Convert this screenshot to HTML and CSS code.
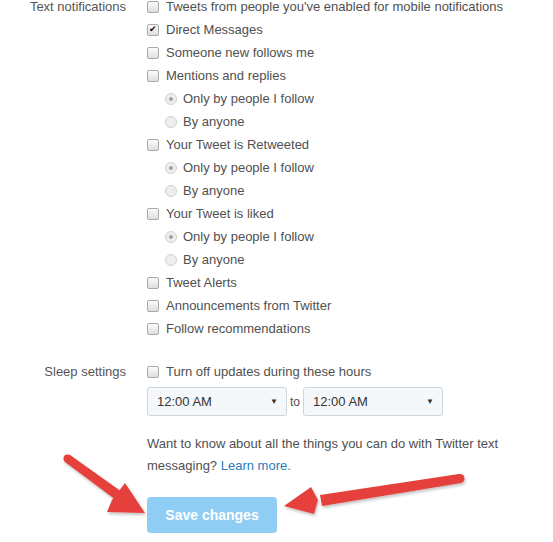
FILE: index.html
```html
<!DOCTYPE html>
<html>
<head>
<meta charset="utf-8">
<link rel="stylesheet" href="styles.css">
</head>
<body>
<div class="page">
  <div class="field">
    <div class="label">Text notifications</div>
    <div class="options">
      <div class="opt"><span class="cb"></span>Tweets from people you've enabled for mobile notifications</div>
      <div class="opt"><span class="cb checked">&#10004;</span>Direct Messages</div>
      <div class="opt"><span class="cb"></span>Someone new follows me</div>
      <div class="opt"><span class="cb"></span>Mentions and replies</div>
      <div class="opt sub"><span class="rd on"></span>Only by people I follow</div>
      <div class="opt sub"><span class="rd"></span>By anyone</div>
      <div class="opt"><span class="cb"></span>Your Tweet is Retweeted</div>
      <div class="opt sub"><span class="rd on"></span>Only by people I follow</div>
      <div class="opt sub"><span class="rd"></span>By anyone</div>
      <div class="opt"><span class="cb"></span>Your Tweet is liked</div>
      <div class="opt sub"><span class="rd on"></span>Only by people I follow</div>
      <div class="opt sub"><span class="rd"></span>By anyone</div>
      <div class="opt"><span class="cb"></span>Tweet Alerts</div>
      <div class="opt"><span class="cb"></span>Announcements from Twitter</div>
      <div class="opt"><span class="cb"></span>Follow recommendations</div>
    </div>
  </div>

  <div class="field sleep">
    <div class="label">Sleep settings</div>
    <div class="options">
      <div class="opt"><span class="cb"></span>Turn off updates during these hours</div>
      <div class="times">
        <div class="select"><span>12:00 AM</span><span class="caret">&#9660;</span></div>
        <span class="to">to</span>
        <div class="select"><span>12:00 AM</span><span class="caret">&#9660;</span></div>
      </div>
    </div>
  </div>

  <div class="field">
    <div class="label"></div>
    <div class="options">
      <div class="info">
        <div>Want to know about all the things you can do with Twitter text</div>
        <div>messaging? <a href="#">Learn more.</a></div>
      </div>
      <button class="save">Save changes</button>
    </div>
  </div>
</div>

<svg class="arrows" width="553" height="542" viewBox="0 0 553 542">
  <defs>
    <filter id="sh" x="-20%" y="-20%" width="140%" height="140%">
      <feDropShadow dx="1" dy="2" stdDeviation="1.5" flood-color="#000" flood-opacity="0.25"/>
    </filter>
  </defs>
  <g fill="#e5403b" filter="url(#sh)">
    <polygon points="65,462 70,455 122,492 116,500"/>
    <circle cx="67.5" cy="458.5" r="4"/>
    <polygon points="145,513 107,512 112,500 125,483"/>
    <polygon points="320,495 459,474 461,483 322,506"/>
    <circle cx="460" cy="478.5" r="4.5"/>
    <polygon points="284,506 311,487 318,500 314,514"/>
  </g>
</svg>
</body>
</html>
```
FILE: styles.css
```css
html, body {
  margin: 0;
  padding: 0;
  background: #fff;
}
body {
  font-family: "Liberation Sans", Arial, sans-serif;
  font-size: 13px;
  color: #505050;
  position: relative;
  width: 553px;
  height: 542px;
  overflow: hidden;
}
.page {
  margin-top: -5px;
}
.field {
  display: grid;
  grid-template-columns: 126px 1fr;
  column-gap: 21px;
}
.label {
  text-align: right;
  line-height: 23px;
  height: 23px;
  color: #555;
}
.sleep {
  margin-top: 20px;
}
.opt {
  display: flex;
  align-items: center;
  height: 23px;
  white-space: nowrap;
}
.opt.sub {
  padding-left: 18px;
}
.cb {
  box-sizing: border-box;
  width: 12px;
  height: 12px;
  border: 1px solid #a9a9a9;
  border-radius: 2px;
  background: linear-gradient(#fbfbfb, #dedede);
  margin-right: 7px;
  flex: none;
  display: flex;
  align-items: center;
  justify-content: center;
  font-size: 9px;
  line-height: 1;
  color: #111;
}
.rd {
  box-sizing: border-box;
  width: 12px;
  height: 12px;
  border: 1px solid #d0d0d0;
  border-radius: 50%;
  background: #eee;
  margin-right: 6px;
  flex: none;
  display: flex;
  align-items: center;
  justify-content: center;
}
.rd.on::after {
  content: "";
  width: 4px;
  height: 4px;
  border-radius: 50%;
  background: #a0a0a0;
}
.times {
  display: flex;
  align-items: center;
  margin-top: 4px;
}
.select {
  box-sizing: border-box;
  width: 140px;
  height: 29px;
  border: 1px solid #ccd6dd;
  border-radius: 3px;
  background: #f5f8fa;
  display: flex;
  align-items: center;
  justify-content: space-between;
  padding: 0 8px 0 9px;
  color: #333;
}
.caret {
  font-size: 8px;
  color: #333;
}
.to {
  padding: 0 3px;
  font-size: 12px;
}
.info {
  margin-top: 17px;
  line-height: 22px;
}
.info a {
  color: #2b7bb9;
  text-decoration: none;
}
.save {
  display: block;
  margin-top: 20px;
  width: 130px;
  height: 36px;
  border: none;
  border-radius: 4px;
  background: #8fcdf4;
  color: #fff;
  font-family: "Liberation Sans", Arial, sans-serif;
  font-weight: bold;
  font-size: 14px;
  padding: 0;
}
.arrows {
  position: absolute;
  left: 0;
  top: 0;
  pointer-events: none;
}
```
